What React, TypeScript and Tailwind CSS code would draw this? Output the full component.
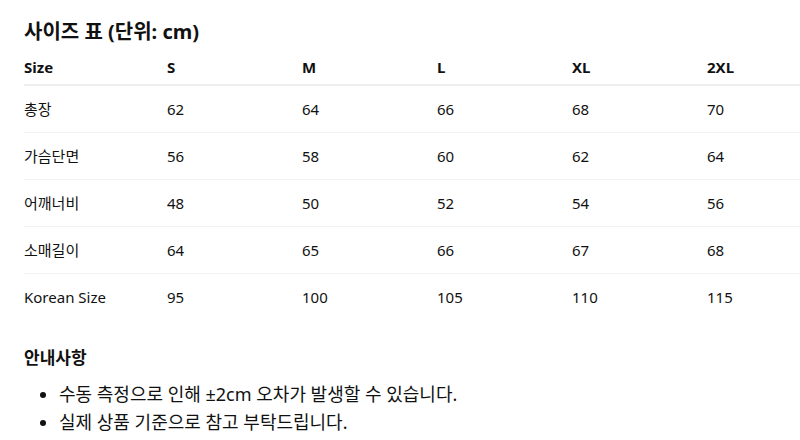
const sizes = ['S', 'M', 'L', 'XL', '2XL'];

const rows = [
  { label: '총장', values: [62, 64, 66, 68, 70] },
  { label: '가슴단면', values: [56, 58, 60, 62, 64] },
  { label: '어깨너비', values: [48, 50, 52, 54, 56] },
  { label: '소매길이', values: [64, 65, 66, 67, 68] },
  { label: 'Korean Size', values: [95, 100, 105, 110, 115] },
];

const notes = [
  '수동 측정으로 인해 ±2cm 오차가 발생할 수 있습니다.',
  '실제 상품 기준으로 참고 부탁드립니다.',
];

export default function App() {
  return (
    <div
      className="w-[800px] h-[440px] overflow-hidden bg-white text-[#111] pl-6 pt-[18px]"
      style={{ fontFamily: '"Noto Sans", "Noto Sans CJK KR", sans-serif' }}
    >
      {/* Title */}
      <h2 className="text-[20px] font-bold leading-[28px]">사이즈 표 (단위: cm)</h2>

      {/* Table */}
      <div className="w-[818px] mt-[10px]">
        <div className="grid grid-cols-[143px_repeat(5,135px)] border-b-2 border-[#eeeeee] pb-[6px]">
          <div className="text-[15px] font-bold leading-[22px]">Size</div>
          {sizes.map((s) => (
            <div key={s} className="text-[15px] font-bold leading-[22px]">
              {s}
            </div>
          ))}
        </div>
        {rows.map((row, i) => (
          <div
            key={row.label}
            className={
              i === rows.length - 1
                ? 'grid grid-cols-[143px_repeat(5,135px)] py-3'
                : 'grid grid-cols-[143px_repeat(5,135px)] py-3 border-b border-[#f2f2f2]'
            }
          >
            <div className="text-[15px] leading-[22px]">{row.label}</div>
            {row.values.map((v, j) => (
              <div key={j} className="text-[15px] leading-[22px]">
                {v}
              </div>
            ))}
          </div>
        ))}
      </div>

      {/* Notes */}
      <h3 className="mt-[26px] text-[17px] font-bold leading-[24px]">안내사항</h3>
      <ul className="list-disc pl-[35px] mt-[10px]">
        {notes.map((n) => (
          <li key={n} className="text-[18px] leading-[28px]">
            {n}
          </li>
        ))}
      </ul>
    </div>
  );
}
